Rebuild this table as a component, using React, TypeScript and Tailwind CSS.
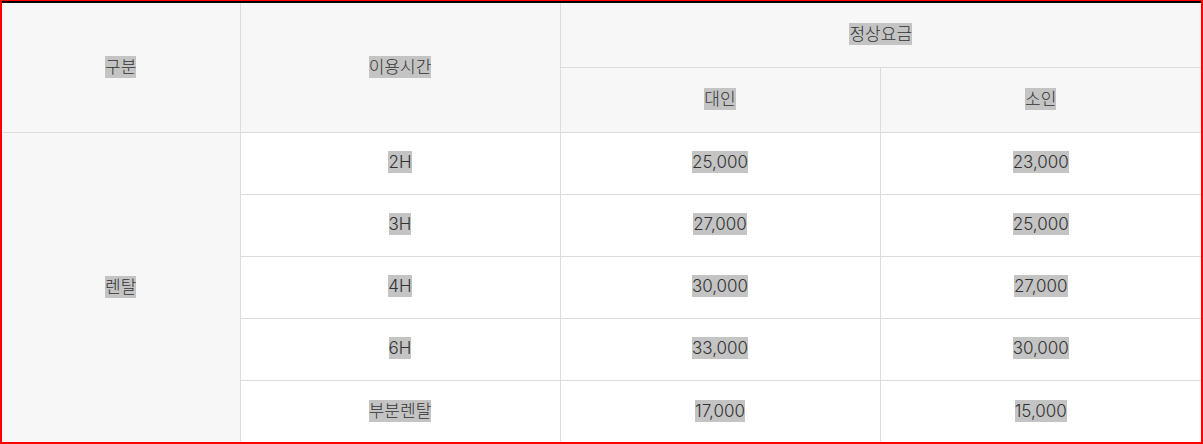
import React from 'react';

const rows = [
  { time: '2H', adult: '25,000', child: '23,000' },
  { time: '3H', adult: '27,000', child: '25,000' },
  { time: '4H', adult: '30,000', child: '27,000' },
  { time: '6H', adult: '33,000', child: '30,000' },
  { time: '부분렌탈', adult: '17,000', child: '15,000' },
];

function Txt({ children }: { children: React.ReactNode }) {
  return <span className="bg-[#c4c4c4] py-[1px]">{children}</span>;
}

export default function App() {
  const font = { fontFamily: 'Inter, "Noto Sans CJK KR", sans-serif' };
  return (
    <div
      className="w-[1203px] h-[444px] border-x-2 border-b-2 border-t border-[#ff0000] bg-white text-[17px] font-light text-[#333]"
      style={font}
    >
      <table className="w-full table-fixed border-collapse border-t-2 border-black text-center">
        <colgroup>
          <col className="w-[238px]" />
          <col className="w-[320px]" />
          <col className="w-[320px]" />
          <col />
        </colgroup>
        <thead>
          <tr className="h-[65px] bg-[#f7f7f7]">
            <th rowSpan={2} className="border-r border-b border-[#dcdcdc] font-light">
              <Txt>구분</Txt>
            </th>
            <th rowSpan={2} className="border-r border-b border-[#dcdcdc] font-light">
              <Txt>이용시간</Txt>
            </th>
            <th colSpan={2} className="border-b border-[#dcdcdc] font-light">
              <Txt>정상요금</Txt>
            </th>
          </tr>
          <tr className="h-[65px] bg-[#f7f7f7]">
            <th className="border-r border-b border-[#dcdcdc] font-light">
              <Txt>대인</Txt>
            </th>
            <th className="border-b border-[#dcdcdc] font-light">
              <Txt>소인</Txt>
            </th>
          </tr>
        </thead>
        <tbody>
          {rows.map((r, i) => (
            <tr key={r.time} className="h-[62px]">
              {i === 0 && (
                <td rowSpan={rows.length} className="border-r border-[#dcdcdc] bg-[#f7f7f7]">
                  <Txt>렌탈</Txt>
                </td>
              )}
              <td className={`border-r border-[#dcdcdc] ${i < rows.length - 1 ? 'border-b' : ''}`}>
                <Txt>{r.time}</Txt>
              </td>
              <td className={`border-r border-[#dcdcdc] ${i < rows.length - 1 ? 'border-b' : ''}`}>
                <Txt>{r.adult}</Txt>
              </td>
              <td className={`border-[#dcdcdc] ${i < rows.length - 1 ? 'border-b' : ''}`}>
                <Txt>{r.child}</Txt>
              </td>
            </tr>
          ))}
        </tbody>
      </table>
    </div>
  );
}
